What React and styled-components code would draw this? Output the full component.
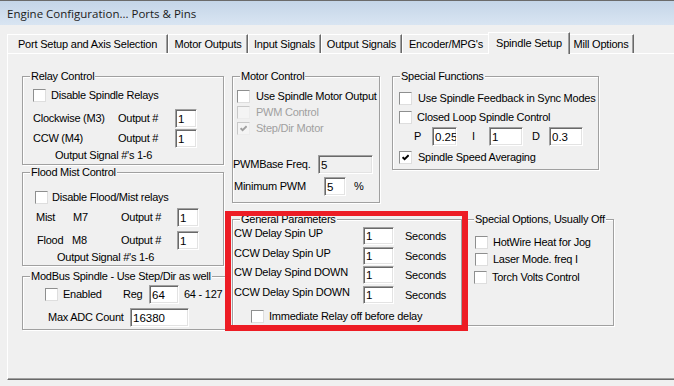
import React from "react";
import styled, { createGlobalStyle } from "styled-components";

const GlobalStyle = createGlobalStyle`
  html, body { margin: 0; padding: 0; background: #f0f0f0; }
  body { font-family: "Liberation Sans", Arial, sans-serif; font-size: 11px; color: #000; }
  #root { width: 674px; height: 386px; }
`;

const Window = styled.div`
  width: 674px;
  height: 386px;
  overflow: hidden;
  background: #f0f0f0;
`;

const TitleBar = styled.div`
  box-sizing: border-box;
  height: 25px;
  border-top: 1px solid #6b6b6b;
  background: linear-gradient(#c4d5e8, #d9e5f2);
  display: flex;
  align-items: center;
  padding-left: 7px;
  font-family: "Open Sans", "Noto Sans", sans-serif;
  font-size: 11.5px;
  color: #1b1b1b;
`;

const TabStrip = styled.div`
  display: flex;
  align-items: flex-end;
  height: 21px;
  margin-top: 7px;
  padding-left: 7px;
`;

const Tab = styled.div`
  box-sizing: border-box;
  flex: none;
  position: relative;
  z-index: ${(p) => (p.$active ? 2 : 0)};
  width: ${(p) => p.$w}px;
  height: ${(p) => (p.$active ? 22 : 19)}px;
  margin: ${(p) => (p.$active ? "0 -2px -1px -2px" : "0")};
  padding-bottom: ${(p) => (p.$active ? 2 : 0)}px;
  border-top: 1px solid #fff;
  border-left: 1px solid #fff;
  border-right: 1px solid #696969;
  box-shadow: inset -1px 0 0 #a0a0a0;
  background: #f0f0f0;
  display: flex;
  align-items: center;
  justify-content: center;
  white-space: nowrap;
  letter-spacing: -0.2px;
`;

const Panel = styled.div`
  position: relative;
  z-index: 1;
  box-sizing: border-box;
  display: flex;
  align-items: flex-start;
  margin-left: 7px;
  width: 720px;
  height: 327px;
  border-top: 1px solid #fff;
  border-left: 1px solid #fff;
  border-bottom: 1px solid #696969;
  box-shadow: inset 0 -1px 0 #a0a0a0;
  padding: 22px 0 0 14px;
`;

const Column = styled.div`
  display: flex;
  flex-direction: column;
  flex: none;
  width: ${(p) => (p.$w ? `${p.$w}px` : "auto")};
  margin-left: ${(p) => p.$ml || 0}px;
`;

const Row = styled.div`
  display: flex;
  align-items: flex-start;
  margin-top: ${(p) => p.$mt || 0}px;
`;

const Group = styled.div`
  position: relative;
  box-sizing: border-box;
  flex: none;
  width: ${(p) => p.$w}px;
  height: ${(p) => p.$h}px;
  margin-left: ${(p) => p.$ml || 0}px;
  margin-top: ${(p) => p.$mt || 0}px;
  border: 1px solid #a0a0a0;
  box-shadow: inset 1px 1px 0 #fff, 1px 1px 0 #fff;
`;

const Legend = styled.span`
  position: absolute;
  top: -7px;
  left: 7px;
  padding: 0 1px;
  line-height: 13px;
  background: #f0f0f0;
  white-space: nowrap;
  letter-spacing: -0.25px;
`;

const Line = styled.div`
  display: flex;
  align-items: center;
  height: ${(p) => p.$h}px;
  margin-top: ${(p) => p.$mt || 0}px;
  padding-left: ${(p) => p.$pl || 0}px;
  overflow: ${(p) => (p.$clip ? "hidden" : "visible")};
`;

const Label = styled.span`
  flex: none;
  width: ${(p) => (p.$w ? `${p.$w}px` : "auto")};
  margin-left: ${(p) => p.$ml || 0}px;
  align-self: ${(p) => (p.$top ? "flex-start" : "auto")};
  color: ${(p) => (p.$disabled ? "#a0a0a0" : "#000")};
  line-height: 13px;
  white-space: nowrap;
  letter-spacing: -0.25px;
`;

const TextBox = styled.input`
  box-sizing: border-box;
  flex: none;
  width: ${(p) => p.$w}px;
  height: ${(p) => p.$h || 19}px;
  margin: 0;
  padding: 0 0 0 2px;
  border: 1px solid;
  border-color: #a0a0a0 #fff #fff #a0a0a0;
  box-shadow: inset 1px 1px 0 #696969, inset -1px -1px 0 #e3e3e3;
  background: ${(p) => (p.$disabled ? "#f0f0f0" : "#fff")};
  font-family: "Liberation Sans", Arial, sans-serif;
  font-size: 11.5px;
  color: #000;
  outline: none;
`;

const CheckSquare = styled.span`
  box-sizing: border-box;
  flex: none;
  width: 13px;
  height: 13px;
  margin-right: ${(p) => p.$gap ?? 5}px;
  border: 1px solid;
  border-color: ${(p) =>
    p.$disabled ? "#c8c8c8 #ececec #ececec #c8c8c8" : "#8e8f8f #dedede #dedede #8e8f8f"};
  background: ${(p) => (p.$disabled ? "#f4f4f4" : "#fff")};
  display: flex;
  align-items: center;
  justify-content: center;
`;

const RedFrame = styled.div`
  position: absolute;
  z-index: 3;
  left: -8px;
  top: -9px;
  box-sizing: border-box;
  width: 243px;
  height: 120px;
  border: solid #ed1c24;
  border-width: 5px 6px 6px 6px;
  pointer-events: none;
`;

function Check({ checked, disabled, gap }) {
  return (
    <CheckSquare $disabled={disabled} $gap={gap}>
      {checked && (
        <svg width="7" height="7" viewBox="0 0 7 7">
          <path
            d="M0.6 3.2 L2.6 5.2 L6.6 1.2"
            stroke={disabled ? "#a0a0a0" : "#000"}
            strokeWidth="1.9"
            fill="none"
          />
        </svg>
      )}
    </CheckSquare>
  );
}

function Box({ value, ...rest }) {
  return <TextBox defaultValue={value} readOnly {...rest} />;
}

const tabs = [
  { t: "Port Setup and Axis Selection", w: 161 },
  { t: "Motor Outputs", w: 80 },
  { t: "Input Signals", w: 73 },
  { t: "Output Signals", w: 81 },
  { t: "Encoder/MPG's", w: 88 },
  { t: "Spindle Setup", w: 82, active: true },
  { t: "Mill Options", w: 66 },
];

const delays = [
  { label: "CW Delay Spin UP", mt: 7 },
  { label: "CCW Delay Spin UP", mt: 2 },
  { label: "CW Delay Spind DOWN", mt: 1 },
  { label: "CCW Delay Spin DOWN", mt: 2 },
];

export default function App() {
  return (
    <>
      <GlobalStyle />
      <Window>
        <TitleBar>Engine Configuration... Ports &amp; Pins</TitleBar>
        <TabStrip>
          {tabs.map((tab) => (
            <Tab key={tab.t} $w={tab.w} $active={tab.active}>
              {tab.t}
            </Tab>
          ))}
        </TabStrip>
        <Panel>
          <Column $w={202}>
            <Group $w={202} $h={89}>
              <Legend>Relay Control</Legend>
              <Line $h={13} $mt={12} $pl={10}>
                <Check />
                <Label>Disable Spindle Relays</Label>
              </Line>
              <Line $h={19} $mt={7} $pl={10}>
                <Label $w={85}>Clockwise (M3)</Label>
                <Label $w={57}>Output #</Label>
                <Box $w={22} value="1" />
              </Line>
              <Line $h={19} $mt={1} $pl={10}>
                <Label $w={85}>CCW (M4)</Label>
                <Label $w={57}>Output #</Label>
                <Box $w={22} value="1" />
              </Line>
              <Line $h={13} $mt={1} $pl={32}>
                <Label>Output Signal #'s 1-6</Label>
              </Line>
            </Group>

            <Group $w={202} $h={94} $mt={7}>
              <Legend>Flood Mist Control</Legend>
              <Line $h={13} $mt={18} $pl={12}>
                <Check gap={4} />
                <Label>Disable Flood/Mist relays</Label>
              </Line>
              <Line $h={19} $mt={4} $pl={13}>
                <Label $w={37}>Mist</Label>
                <Label $w={48}>M7</Label>
                <Label $w={56}>Output #</Label>
                <Box $w={22} value="1" />
              </Line>
              <Line $h={19} $mt={4} $pl={14}>
                <Label $w={35}>Flood</Label>
                <Label $w={49}>M8</Label>
                <Label $w={56}>Output #</Label>
                <Box $w={22} value="1" />
              </Line>
              <Line $h={13} $mt={1} $pl={34}>
                <Label>Output Signal #'s 1-6</Label>
              </Line>
            </Group>

            <Group $w={207} $h={54} $mt={10}>
              <Legend>ModBus Spindle - Use Step/Dir as well</Legend>
              <Line $h={19} $mt={8} $pl={22}>
                <Check />
                <Label $w={60}>Enabled</Label>
                <Label $w={26}>Reg</Label>
                <Box $w={30} value="64" />
                <Label $ml={5}>64 - 127</Label>
              </Line>
              <Line $h={19} $mt={4} $pl={25}>
                <Label $w={82}>Max ADC Count</Label>
                <Box $w={59} value="16380" />
              </Line>
            </Group>
          </Column>

          <Column>
            <Row>
              <Group $w={148} $h={127} $ml={8}>
                <Legend>Motor Control</Legend>
                <Line $h={13} $mt={13} $pl={4}>
                  <Check gap={6} />
                  <Label>Use Spindle Motor Output</Label>
                </Line>
                <Line $h={13} $mt={3} $pl={4}>
                  <Check gap={6} disabled />
                  <Label $disabled>PWM Control</Label>
                </Line>
                <Line $h={13} $mt={3} $pl={4}>
                  <Check gap={6} disabled checked />
                  <Label $disabled>Step/Dir Motor</Label>
                </Line>
                <Line $h={19} $mt={20}>
                  <Label $w={85}>PWMBase Freq.</Label>
                  <Box $w={55} value="5" $disabled />
                </Line>
                <Line $h={19} $mt={3} $pl={1}>
                  <Label $w={90}>Minimum PWM</Label>
                  <Box $w={22} value="5" />
                  <Label $ml={8}>%</Label>
                </Line>
              </Group>

              <Group $w={207} $h={94} $ml={12}>
                <Legend>Special Functions</Legend>
                <Line $h={13} $mt={15} $pl={6} $clip>
                  <Check gap={6} />
                  <Label>Use Spindle Feedback in Sync Modes</Label>
                </Line>
                <Line $h={13} $mt={6} $pl={6}>
                  <Check gap={5} />
                  <Label>Closed Loop Spindle Control</Label>
                </Line>
                <Line $h={19} $mt={3} $pl={21}>
                  <Label $w={18}>P</Label>
                  <Box $w={25} value="0.25" />
                  <Label $w={17} $ml={15}>I</Label>
                  <Box $w={34} value="1" />
                  <Label $w={17} $ml={9}>D</Label>
                  <Box $w={34} value="0.3" />
                </Line>
                <Line $h={13} $mt={5} $pl={6}>
                  <Check gap={6} checked />
                  <Label>Spindle Speed Averaging</Label>
                </Line>
              </Group>
            </Row>

            <Row $mt={16}>
              <Group $w={230} $h={108} $ml={8}>
                <Legend>General Parameters</Legend>
                {delays.map((d) => (
                  <Line key={d.label} $h={18} $mt={d.mt} $pl={1}>
                    <Label $w={129} $top>
                      {d.label}
                    </Label>
                    <Box $w={31} $h={18} value="1" />
                    <Label $ml={11}>Seconds</Label>
                  </Line>
                ))}
                <Line $h={13} $mt={6} $pl={18}>
                  <Check />
                  <Label>Immediate Relay off before delay</Label>
                </Line>
                <RedFrame />
              </Group>

              <Group $w={148} $h={107} $ml={4}>
                <Legend>Special Options, Usually Off</Legend>
                <Line $h={13} $mt={16} $pl={8}>
                  <Check />
                  <Label>HotWire Heat for Jog</Label>
                </Line>
                <Line $h={13} $mt={4} $pl={8}>
                  <Check />
                  <Label>Laser Mode. freq I</Label>
                </Line>
                <Line $h={13} $mt={5} $pl={7}>
                  <Check />
                  <Label>Torch Volts Control</Label>
                </Line>
              </Group>
            </Row>
          </Column>
        </Panel>
      </Window>
    </>
  );
}
